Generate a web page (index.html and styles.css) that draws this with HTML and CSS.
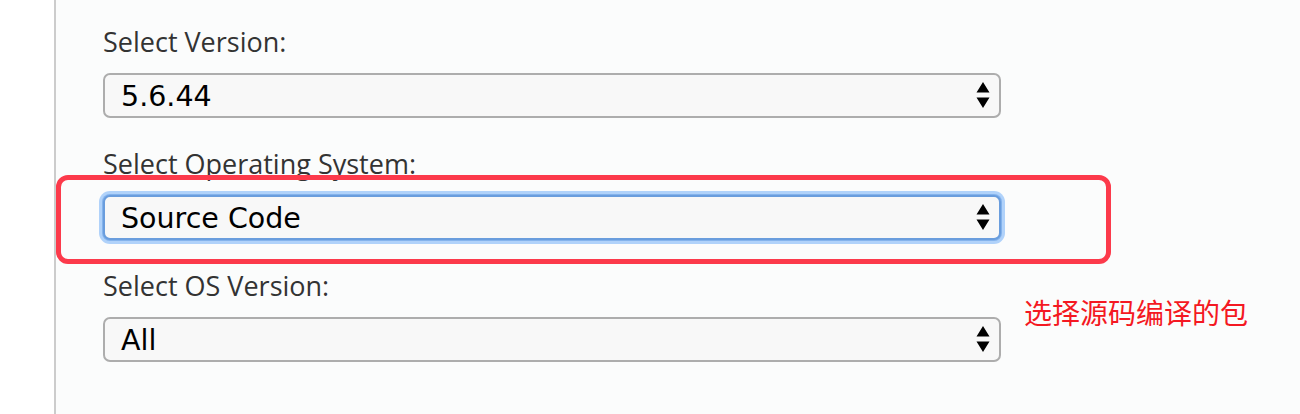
FILE: index.html
```html
<!DOCTYPE html>
<html lang="en">
<head>
<meta charset="utf-8">
<title>Select download</title>
<link rel="stylesheet" href="styles.css">
</head>
<body>
<div class="page">
  <div class="gutter"></div>
  <div class="panel">
    <div class="field">
      <div class="label">Select Version:</div>
      <div class="select">
        <span class="value">5.6.44</span>
        <svg class="arrows" width="14" height="27" viewBox="0 0 14 27"><path d="M7 0 L13.5 10.5 L0.5 10.5 Z M0.5 15.5 L13.5 15.5 L7 26 Z" fill="#000"/></svg>
      </div>
    </div>
    <div class="field">
      <div class="label">Select Operating System:</div>
      <div class="select focused">
        <span class="value">Source Code</span>
        <svg class="arrows" width="14" height="27" viewBox="0 0 14 27"><path d="M7 0 L13.5 10.5 L0.5 10.5 Z M0.5 15.5 L13.5 15.5 L7 26 Z" fill="#000"/></svg>
      </div>
    </div>
    <div class="field">
      <div class="label">Select OS Version:</div>
      <div class="select">
        <span class="value">All</span>
        <svg class="arrows" width="14" height="27" viewBox="0 0 14 27"><path d="M7 0 L13.5 10.5 L0.5 10.5 Z M0.5 15.5 L13.5 15.5 L7 26 Z" fill="#000"/></svg>
      </div>
    </div>
  </div>
  <div class="mark-box"></div>
  <div class="mark-note">选择源码编译的包</div>
</div>
</body>
</html>
```

FILE: styles.css
```css
html, body {
  margin: 0;
  padding: 0;
  background: #ffffff;
}

.page {
  position: relative;
  display: flex;
  width: 1300px;
  height: 414px;
  overflow: hidden;
}

.gutter {
  width: 54px;
  flex: none;
  background: #ffffff;
}

.panel {
  flex: 1;
  border-left: 2px solid #cccccc;
  background: #fbfcfc;
  padding: 24px 0 0 47px;
  display: flex;
  flex-direction: column;
  gap: 28px;
}

.field {
  display: flex;
  flex-direction: column;
  gap: 13px;
}

.label {
  font-family: "Open Sans", "Noto Sans", sans-serif;
  font-size: 27px;
  line-height: 36px;
  color: #333333;
}

.select {
  box-sizing: border-box;
  width: 898px;
  height: 45px;
  display: flex;
  align-items: center;
  justify-content: space-between;
  padding: 0 9px 0 16px;
  background: #f8f8f8;
  border: 2px solid #adadad;
  border-radius: 7px;
  font-family: "DejaVu Sans", sans-serif;
  font-size: 28.5px;
  color: #000000;
}

.select.focused {
  border-color: #6a9ddd;
  box-shadow: 0 0 0 1px #84b3ec, 0 0 0 4px #b0d2fa;
}

.value {
  line-height: 1;
  padding-top: 4px;
}

.arrows {
  display: block;
}

.mark-box {
  position: absolute;
  left: 56px;
  top: 175px;
  width: 1055px;
  height: 89px;
  box-sizing: border-box;
  border: 5px solid #fc3a4b;
  border-radius: 12px;
}

.mark-note {
  position: absolute;
  left: 1024px;
  top: 296px;
  font-family: "Noto Sans CJK SC", sans-serif;
  font-size: 28px;
  line-height: 1.2;
  color: #f41822;
}
```
